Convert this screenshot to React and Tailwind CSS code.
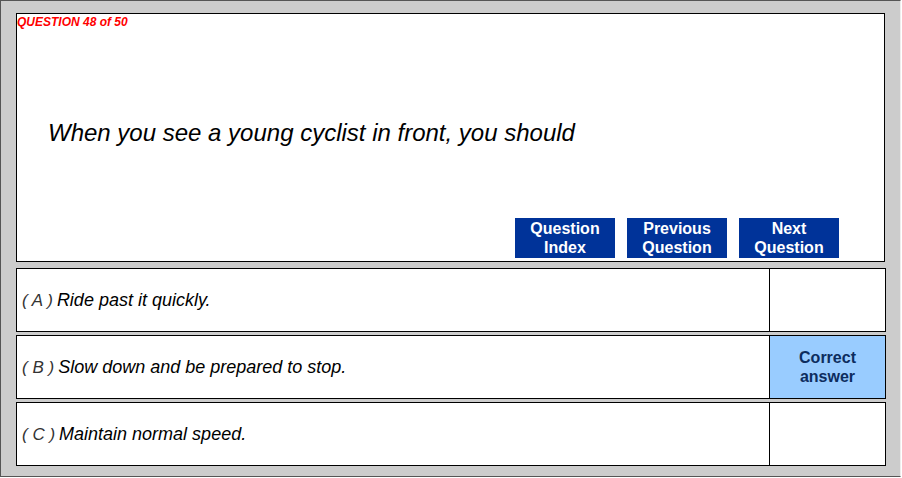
import React from 'react';

const answers = [
  { letter: 'A', text: 'Ride past it quickly.', correct: false },
  { letter: 'B', text: 'Slow down and be prepared to stop.', correct: true },
  { letter: 'C', text: 'Maintain normal speed.', correct: false },
];

function NavButton({ top, bottom }) {
  return (
    <button className="w-[100px] h-[40px] bg-[#003399] text-white font-bold text-[16px] leading-[19px] flex flex-col items-center justify-center">
      <span>{top}</span>
      <span>{bottom}</span>
    </button>
  );
}

export default function App() {
  return (
    <div className="w-[902px] h-[478px] bg-white font-['Liberation_Sans',Arial,sans-serif]">
      <div className="w-[901px] h-[477px] bg-[#cccccc] border-l border-t border-b border-[#555555] border-r border-r-[#eeeeee] pl-[15px] pt-[12px] flex flex-col">
        {/* question panel */}
        <div className="w-[869px] h-[249px] bg-white border border-black flex flex-col">
          <div className="text-[#ff0000] font-bold italic text-[12px] leading-[14px] pt-[1px]">
            QUESTION 48 of 50
          </div>
          <div className="pl-[31px] pt-[90px] text-[24px] leading-[28px] italic text-black">
            When you see a young cyclist in front, you should
          </div>
          <div className="flex justify-end gap-[12px] pr-[45px] mt-auto mb-[3px]">
            <NavButton top="Question" bottom="Index" />
            <NavButton top="Previous" bottom="Question" />
            <NavButton top="Next" bottom="Question" />
          </div>
        </div>

        {/* answers */}
        <div className="flex flex-col gap-[3px] mt-[6px]">
          {answers.map((a) => (
            <div key={a.letter} className="w-[870px] h-[64px] bg-white border border-black flex">
              <div className="flex-1 flex items-center pl-[5px] italic text-[18px] text-black">
                <p className="leading-[22px]">
                  <span className="text-[#333333] text-[17px] mr-[4px]">( {a.letter} )</span>
                  {a.text}
                </p>
              </div>
              {a.correct ? (
                <div className="w-[116px] border-l border-black bg-[#99ccff] flex flex-col items-center justify-center text-[#0d2d5e] font-bold text-[16px] leading-[19px]">
                  <span>Correct</span>
                  <span>answer</span>
                </div>
              ) : (
                <div className="w-[116px] border-l border-black bg-white" />
              )}
            </div>
          ))}
        </div>
      </div>
    </div>
  );
}
